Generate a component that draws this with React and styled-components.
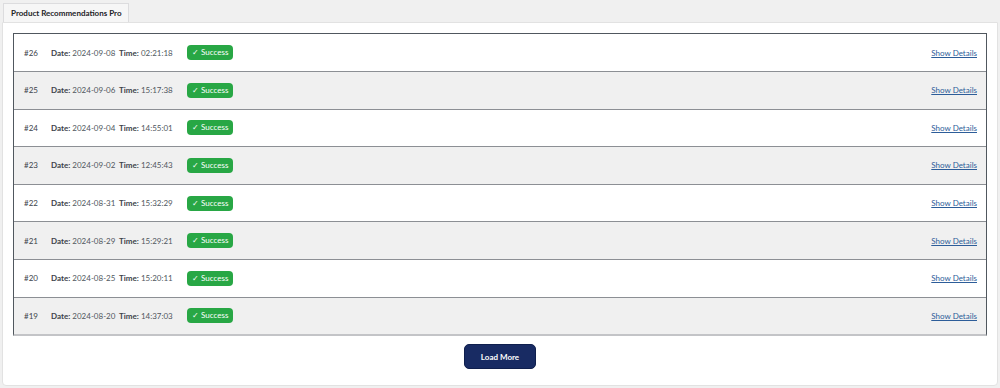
import React from 'react'
import styled, { createGlobalStyle } from 'styled-components'

const runs = [
    { id: 26, date: '2024-09-08', time: '02:21:18' },
    { id: 25, date: '2024-09-06', time: '15:17:38' },
    { id: 24, date: '2024-09-04', time: '14:55:01' },
    { id: 23, date: '2024-09-02', time: '12:45:43' },
    { id: 22, date: '2024-08-31', time: '15:32:29' },
    { id: 21, date: '2024-08-29', time: '15:29:21' },
    { id: 20, date: '2024-08-25', time: '15:20:11' },
    { id: 19, date: '2024-08-20', time: '14:37:03' }
]

export default function App() {
    return (
        <>
            <GlobalStyle />
            <Page>
                <Tabs>
                    <Tab>Product Recommendations Pro</Tab>
                </Tabs>
                <Panel>
                    <RunTable>
                        {runs.map(run => (
                            <Row key={run.id}>
                                <RunId>#{run.id}</RunId>
                                <Field><b>Date:</b> {run.date}</Field>
                                <Field><b>Time:</b> {run.time}</Field>
                                <Badge>✓ Success</Badge>
                                <DetailsLink href='#'>Show Details</DetailsLink>
                            </Row>
                        ))}
                    </RunTable>
                    <Footer>
                        <LoadMore>Load More</LoadMore>
                    </Footer>
                </Panel>
            </Page>
        </>
    )
}

const GlobalStyle = createGlobalStyle`
    body {
        margin: 0;
        background: #f0f0f0;
        font-family: Lato, "Liberation Sans", sans-serif;
        color: #3c434a;
    }
`

const Page = styled.div`
    padding: 3px 2px 2px 2px;
    height: 388px;
    box-sizing: border-box;
    display: flex;
    flex-direction: column;
`

const Tabs = styled.div`
    display: flex;
    padding-left: 1px;
`

const Tab = styled.div`
    font-size: 8px;
    font-weight: 700;
    color: #1d2327;
    background: #f6f6f6;
    border: 1px solid #dcdcde;
    border-bottom: none;
    padding: 0 6px 0 7px;
    height: 18px;
    line-height: 18px;
`

const Panel = styled.div`
    flex: 1;
    background: #fff;
    border: 1px solid #e2e2e2;
    border-radius: 0 0 4px 4px;
    padding: 10px 10px 0 10px;
`

const RunTable = styled.div`
    border: 1px solid #50575e;
    border-bottom: 2px solid #c3c4c7;
`

const Row = styled.div`
    box-sizing: border-box;
    display: flex;
    align-items: center;
    height: 37.6px;
    padding: 0 9px 0 10px;
    font-size: 8px;
    border-top: 1px solid #8c8f94;
    &:first-child { border-top: none; height: 37px; }
    &:nth-child(even) { background: #f0f0f0; }
`

const RunId = styled.span`
    width: 27px;
    color: #3c434a;
`

const Field = styled.span`
    width: 68px;
    white-space: nowrap;
    color: #50575e;
    b { color: #3c434a; font-weight: 700; }
`

const Badge = styled.span`
    background: #28a745;
    color: #fff;
    border-radius: 4px;
    height: 15px;
    line-height: 15px;
    padding: 0 5px;
    font-size: 8px;
`

const DetailsLink = styled.a`
    margin-left: auto;
    color: #2d5d99;
    text-decoration: underline;
    font-size: 8px;
`

const Footer = styled.div`
    display: flex;
    justify-content: center;
    padding-top: 8px;
`

const LoadMore = styled.button`
    background: #182b63;
    color: #fff;
    border: 1px solid #0f1f4d;
    border-radius: 5px;
    width: 72px;
    height: 25px;
    font-family: inherit;
    font-size: 8px;
    font-weight: 700;
`
